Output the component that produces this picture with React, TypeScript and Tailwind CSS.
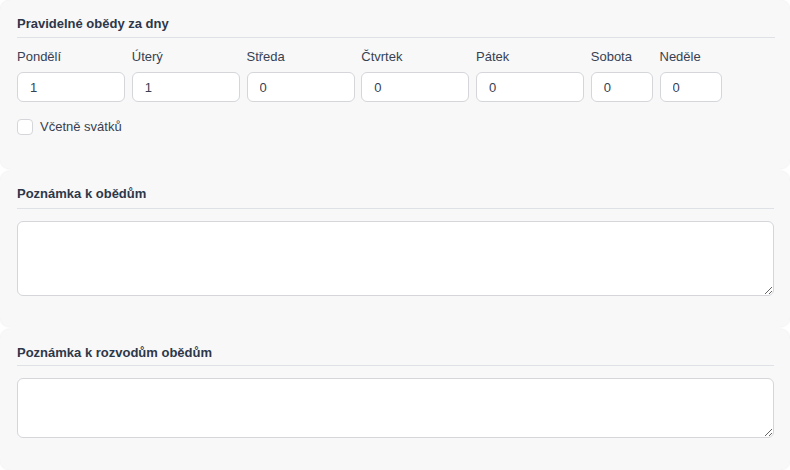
import * as React from "react";

const days = [
  { label: "Pondělí", value: "1", w: "w-[108px]" },
  { label: "Úterý", value: "1", w: "w-[108px]" },
  { label: "Středa", value: "0", w: "w-[108px]" },
  { label: "Čtvrtek", value: "0", w: "w-[108px]" },
  { label: "Pátek", value: "0", w: "w-[108px]" },
  { label: "Sobota", value: "0", w: "w-[62px]" },
  { label: "Neděle", value: "0", w: "w-[62px]" },
];

function SectionTitle({ children, pb }: { children: React.ReactNode; pb: string }) {
  return (
    <div className={`border-b border-[#dee2e6] ${pb} text-[13px] leading-[16px] font-bold text-[#2d3748]`}>
      {children}
    </div>
  );
}

export default function App() {
  const [holidays, setHolidays] = React.useState(false);

  return (
    <div
      className="flex h-[470px] w-[790px] flex-col gap-[2px] overflow-hidden bg-white"
      style={{ fontFamily: '"Liberation Sans", Arial, sans-serif' }}
    >
      <div className="shrink-0 rounded-[10px] bg-[#f8f8f9] pt-[16px] pr-[15px] pb-[34px] pl-[17px] shadow-[0_0_2px_rgba(0,0,0,0.1)]">
        <SectionTitle pb="pb-[5px]">Pravidelné obědy za dny</SectionTitle>
        <div className="mt-[11px] flex gap-[6.75px]">
          {days.map((d) => (
            <div key={d.label} className="flex flex-col gap-[7px]">
              <label className="text-[13px] leading-[16px] text-[#374151]">
                {d.label}
              </label>
              <input
                defaultValue={d.value}
                className={`${d.w} h-[30px] rounded-[6px] border border-[#d4d6da] bg-white px-[12px] text-[13px] text-[#374151] outline-none`}
              />
            </div>
          ))}
        </div>
        <label className="mt-[17px] flex items-center gap-[7px] text-[13px] leading-[16px] text-[#374151]">
          <input
            type="checkbox"
            checked={holidays}
            onChange={(e) => setHolidays(e.target.checked)}
            className="h-[16px] w-[16px] appearance-none rounded-[4px] border border-[#d4d6da] bg-white"
          />
          Včetně svátků
        </label>
      </div>

      <div className="shrink-0 rounded-[10px] bg-[#f8f8f9] pt-[15px] pr-[16px] pb-[31px] pl-[17px] shadow-[0_0_2px_rgba(0,0,0,0.1)]">
        <SectionTitle pb="pb-[6px]">Poznámka k obědům</SectionTitle>
        <textarea className="mt-[12px] block h-[75px] w-full rounded-[6px] border border-[#d4d6da] bg-white p-2 text-[13px] outline-none" />
      </div>

      <div className="shrink-0 rounded-[10px] bg-[#f8f8f9] pt-[16px] pr-[16px] pb-[32px] pl-[17px] shadow-[0_0_2px_rgba(0,0,0,0.1)]">
        <SectionTitle pb="pb-[4px]">Poznámka k rozvodům obědům</SectionTitle>
        <textarea className="mt-[12px] block h-[60px] w-full rounded-[6px] border border-[#d4d6da] bg-white p-2 text-[13px] outline-none" />
      </div>
    </div>
  );
}
